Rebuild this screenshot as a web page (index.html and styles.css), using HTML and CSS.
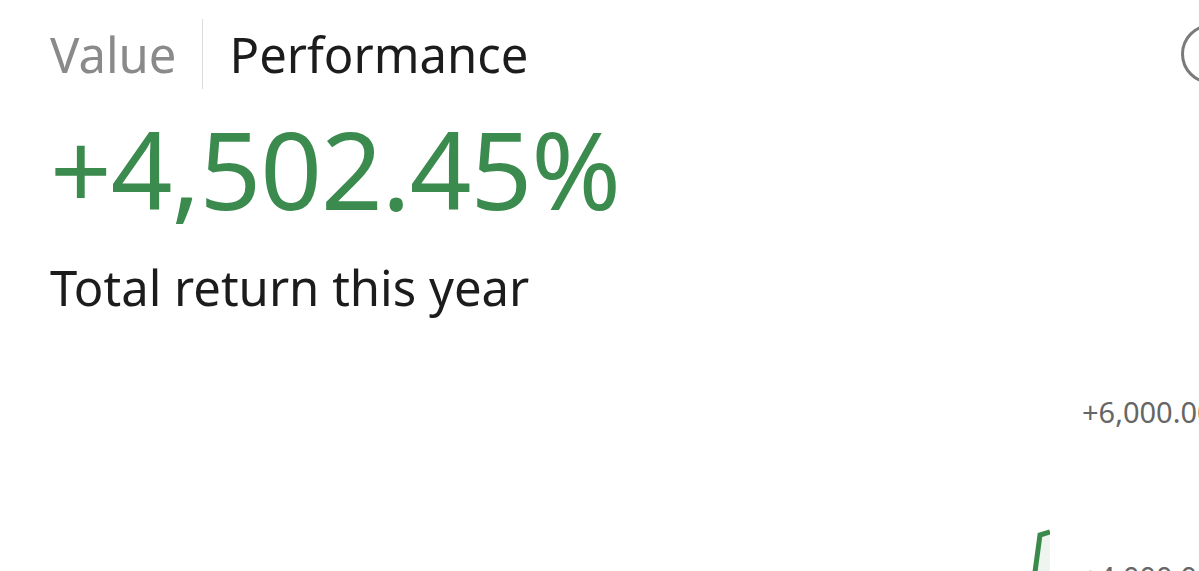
FILE: index.html
```html
<!DOCTYPE html>
<html lang="en">
<head>
  <meta charset="UTF-8" />
  <meta name="viewport" content="width=device-width, initial-scale=1.0"/>
  <title>Portfolio Performance</title>
  <link rel="stylesheet" href="styles.css">
</head>
<body>
  <header class="top">
    <nav class="tabs">
      <span class="tab">Value</span>
      <span class="tab active">Performance</span>
    </nav>
    <button class="info-btn" type="button" aria-label="Info"></button>
  </header>

  <section class="summary">
    <div class="total">+4,502.45%</div>
    <div class="caption">Total return this year</div>
  </section>

  <section class="chart">
    <svg class="plot" viewBox="0 0 1000 180" preserveAspectRatio="none">
      <!-- area under the return line -->
      <path d="M985 180 L990 143 L1000 140 L1000 180 Z" fill="#eef5ef"/>
      <path d="M985 180 L990 143 L1000 140" fill="none" stroke="#3a8a4b" stroke-width="5"/>
    </svg>
    <div class="axis">
      <span class="tick">+6,000.00%</span>
      <span class="tick">+4,000.00%</span>
    </div>
  </section>
</body>
</html>
```

FILE: styles.css
```css
html, body {
  margin: 0;
  overflow: hidden;
  background-color: #ffffff;
}
body {
  font-family: 'Noto Sans', 'Open Sans', sans-serif;
  color: #1c1c1c;
  padding-left: 50px;
  height: 571px;
}
.top {
  display: flex;
  justify-content: space-between;
  align-items: center;
  padding-top: 19px;
}
.tabs {
  display: flex;
  align-items: stretch;
}
.tab {
  font-size: 49px;
  line-height: 70px;
  color: #1c1c1c;
}
.tab:first-child {
  color: #8a8a8a;
  padding-right: 26px;
  border-right: 1.5px solid #dcdcdc;
}
.tab.active {
  padding-left: 26px;
}
.info-btn {
  width: 60px;
  height: 60px;
  border: 3px solid #7a7a7a;
  border-radius: 50%;
  background: none;
  margin-right: -42px;
  padding: 0;
}
/* big figure + label */
.summary {
  padding-top: 20px;
}
.total {
  font-size: 108px;
  line-height: 120px;
  color: #3b8a4e;
  letter-spacing: -1px;
}
.caption {
  font-size: 49px;
  line-height: 60px;
  margin-top: 28px;
}
.chart {
  display: flex;
  margin-top: 75px;
}
.plot {
  width: 1000px;
  height: 180px;
  flex: none;
}
.axis {
  display: flex;
  flex-direction: column;
  gap: 125px;
  padding-left: 32px;
}
.tick {
  font-size: 29px;
  line-height: 40px;
  color: #666666;
  white-space: nowrap;
}
```
